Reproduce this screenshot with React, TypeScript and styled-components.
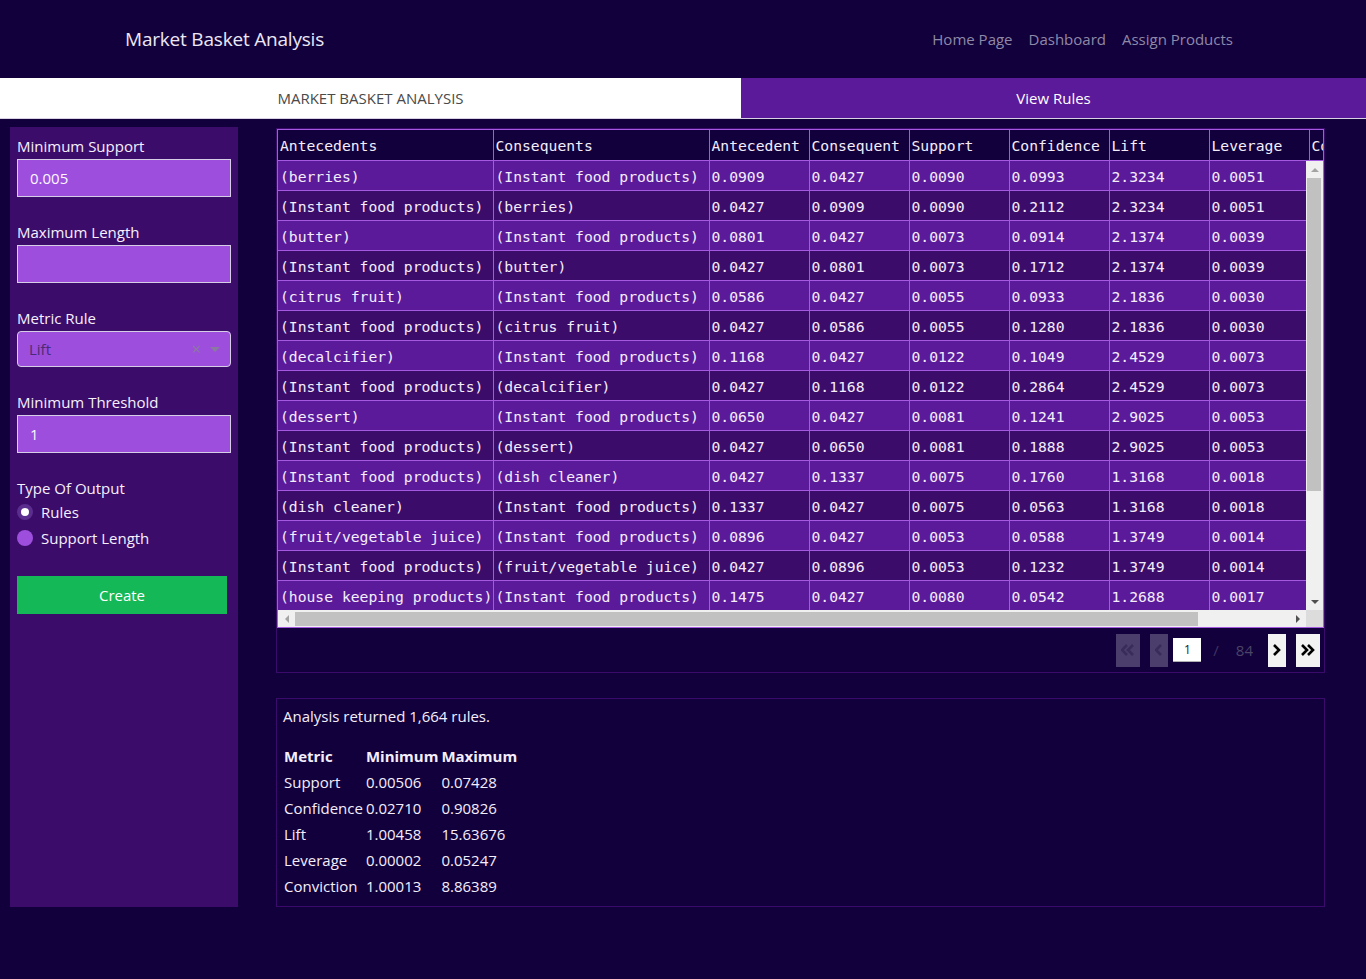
import { FC } from "react";
import styled, { createGlobalStyle } from "styled-components";

const GlobalStyle = createGlobalStyle`
  html, body {
    margin: 0;
    padding: 0;
    background: #12003c;
    font-family: "Open Sans", "Noto Sans", sans-serif;
    color: #f4eefc;
  }
`;

const Page = styled.div`
  width: 1366px;
  min-height: 979px;
  background: #12003c;
`;

/* ---------- top navbar ---------- */
const NavBar = styled.header`
  height: 78px;
  display: flex;
  align-items: center;
`;
const NavInner = styled.div`
  width: 1140px;
  margin: 0 auto;
  padding: 0 12px;
  box-sizing: border-box;
  display: flex;
  align-items: center;
  justify-content: space-between;
`;
const Brand = styled.div`
  font-size: 19px;
  color: #ece8f6;
  letter-spacing: -0.2px;
`;
const NavLinks = styled.nav`
  display: flex;
  padding-right: 8px;
  gap: 16px;
`;
const NavLink = styled.a`
  font-size: 15px;
  color: #8f89a8;
  text-decoration: none;
`;

/* ---------- tabs ---------- */
const TabBar = styled.div`
  display: grid;
  grid-template-columns: 741px 1fr;
  height: 40px;
  border-bottom: 1px solid #d8d2e4;
`;
const Tab = styled.div<{ $active?: boolean }>`
  display: flex;
  align-items: center;
  justify-content: center;
  font-size: 15px;
  background: ${(p) => (p.$active ? "#5b1a9a" : "#ffffff")};
  color: ${(p) => (p.$active ? "#ffffff" : "#4a4a4a")};
  text-transform: ${(p) => (p.$active ? "none" : "uppercase")};
`;

/* ---------- body layout ---------- */
const Body = styled.div`
  display: grid;
  grid-template-columns: 228px 1049px;
  column-gap: 38px;
  padding: 8px 0 0 10px;
`;

const Sidebar = styled.aside`
  background: #3c0c6a;
  height: 780px;
  padding: 8px 7px 0;
  box-sizing: border-box;
`;
const Field = styled.div`
  margin-bottom: 24px;
`;
const Label = styled.div<{ $tight?: boolean }>`
  font-size: 15px;
  line-height: 22px;
  color: #f6f0ff;
  margin-bottom: ${(p) => (p.$tight ? 0 : 2)}px;
`;
const TextInput = styled.div`
  height: 38px;
  width: 214px;
  box-sizing: border-box;
  background: #9d4edd;
  border: 1px solid #d6cde6;
  padding: 0 12px;
  font-size: 15px;
  display: flex;
  align-items: center;
  color: #fbf7ff;
`;
const Select = styled.div`
  height: 36px;
  width: 214px;
  box-sizing: border-box;
  background: #9d4edd;
  border: 1px solid #d6cde6;
  border-radius: 4px;
  padding: 0 10px 0 11px;
  font-size: 15px;
  display: flex;
  align-items: center;
  color: #4b2a75;
`;
const SelectValue = styled.span`
  flex: 1;
`;
const SelectClear = styled.span`
  color: #8a7aa0;
  font-size: 16px;
  margin-right: 9px;
`;
const Caret = styled.span`
  width: 0;
  height: 0;
  border-left: 5px solid transparent;
  border-right: 5px solid transparent;
  border-top: 5px solid #8a7aa0;
`;
const RadioRow = styled.label`
  display: flex;
  align-items: center;
  gap: 8px;
  font-size: 15px;
  height: 26px;
  color: #f6f0ff;
`;
const RadioDot = styled.span<{ $checked?: boolean }>`
  width: 16px;
  height: 16px;
  border-radius: 50%;
  box-sizing: border-box;
  background: ${(p) => (p.$checked ? "#ffffff" : "#9d4edd")};
  border: ${(p) => (p.$checked ? "4px solid #5a2d8e" : "none")};
`;
const CreateButton = styled.button`
  margin-top: 25px;
  width: 210px;
  height: 38px;
  border: none;
  background: #14b856;
  color: #ffffff;
  font-family: inherit;
  font-size: 15px;
  cursor: pointer;
`;

/* ---------- rules table ---------- */
const Main = styled.main`
  display: flex;
  flex-direction: column;
  gap: 25px;
  padding-top: 1px;
`;
const Card = styled.section`
  border: 1px solid #3a0b6b;
`;
const TableFrame = styled.div`
  border: 1px solid #a35ae0;
`;
const HeadClip = styled.div`
  overflow: hidden;
  background: #12003c;
`;
const ScrollArea = styled.div`
  display: grid;
  grid-template-columns: 1fr 17px;
  grid-template-rows: 449px 17px;
  background: #f0f0f0;
`;
const Viewport = styled.div`
  overflow: hidden;
`;
const VBar = styled.div`
  display: flex;
  flex-direction: column;
  background: #f0f0f0;
`;
const HBar = styled.div`
  display: flex;
  background: #f0f0f0;
`;
const Corner = styled.div`
  background: #dcdcdc;
`;
const ArrowBtn = styled.div`
  width: 17px;
  height: 17px;
  flex: none;
  display: flex;
  align-items: center;
  justify-content: center;
`;
const Tri = styled.span<{ $dir: "up" | "down" | "left" | "right"; $on?: boolean }>`
  width: 0;
  height: 0;
  ${(p) => {
    const c = p.$on ? "#505050" : "#a3a3a3";
    switch (p.$dir) {
      case "up":
        return `border-left: 4px solid transparent; border-right: 4px solid transparent; border-bottom: 4px solid ${c};`;
      case "down":
        return `border-left: 4px solid transparent; border-right: 4px solid transparent; border-top: 4px solid ${c};`;
      case "left":
        return `border-top: 4px solid transparent; border-bottom: 4px solid transparent; border-right: 4px solid ${c};`;
      default:
        return `border-top: 4px solid transparent; border-bottom: 4px solid transparent; border-left: 4px solid ${c};`;
    }
  }}
`;
const Track = styled.div<{ $vertical?: boolean }>`
  flex: 1;
  display: flex;
  flex-direction: ${(p) => (p.$vertical ? "column" : "row")};
  padding: ${(p) => (p.$vertical ? "0 2px 0 1px" : "2px 0 1px")};
`;
const Thumb = styled.div`
  background: #c1c1c1;
  flex: none;
`;

const Grid = styled.table`
  border-collapse: collapse;
  table-layout: fixed;
  width: 1131px;
  font-family: "DejaVu Sans Mono", "Liberation Mono", monospace;
  font-size: 14.7px;
  color: #f4eefc;
`;
const HeadCell = styled.th`
  text-align: left;
  font-weight: normal;
  height: 30px;
  padding: 0 2px;
  border: 1px solid #a35ae0;
  border-top: none;
  white-space: nowrap;
  overflow: hidden;
  &:first-child { border-left: none; }
`;
const Row = styled.tr<{ $odd: boolean }>`
  background: ${(p) => (p.$odd ? "#5b1a9a" : "#3c0c6a")};
`;
const Cell = styled.td`
  height: 27px;
  padding: 2px 2px 0;
  border: 1px solid #a35ae0;
  border-top: none;
  white-space: nowrap;
  overflow: hidden;
  &:first-child { border-left: none; }
`;

const Pager = styled.div`
  height: 44px;
  display: flex;
  align-items: center;
  justify-content: flex-end;
  padding-right: 4px;
`;
const PageBtn = styled.button<{ $disabled?: boolean; $w: number; $gap: number }>`
  width: ${(p) => p.$w}px;
  height: 33px;
  border: none;
  padding: 0;
  margin-left: ${(p) => p.$gap}px;
  background: ${(p) => (p.$disabled ? "#4b3d6c" : "#f2f2f2")};
  display: flex;
  align-items: center;
  justify-content: center;
`;
const PageInput = styled.div`
  width: 28px;
  height: 23px;
  margin-left: 5px;
  background: #ffffff;
  border-bottom: 1px solid #b0b0b0;
  color: #222;
  font-size: 12px;
  display: flex;
  align-items: center;
  justify-content: center;
`;
const PageSep = styled.span`
  color: #3e3462;
  font-size: 15px;
  margin: 0 17px 0 12px;
`;
const PageTotal = styled.span`
  color: #4c4468;
  font-size: 15px;
`;

/* ---------- summary ---------- */
const Summary = styled.section`
  border: 1px solid #3a0b6b;
  padding: 6px 6px 10px;
  height: 209px;
  box-sizing: border-box;
  font-size: 15px;
`;
const SummaryText = styled.p`
  margin: 0 0 16px;
  line-height: 22px;
`;
const StatTable = styled.table`
  border-collapse: collapse;
  & td, & th {
    padding: 0 2px 0 1px;
    height: 26px;
    text-align: left;
  }
  & th {
    font-weight: 700;
  }
`;

type Rule = [string, string, string, string, string, string, string, string, string];

const IFP = "(Instant food products)";
const rules: Rule[] = [
  ["(berries)", IFP, "0.0909", "0.0427", "0.0090", "0.0993", "2.3234", "0.0051", "1.0628"],
  [IFP, "(berries)", "0.0427", "0.0909", "0.0090", "0.2112", "2.3234", "0.0051", "1.1526"],
  ["(butter)", IFP, "0.0801", "0.0427", "0.0073", "0.0914", "2.1374", "0.0039", "1.0536"],
  [IFP, "(butter)", "0.0427", "0.0801", "0.0073", "0.1712", "2.1374", "0.0039", "1.1099"],
  ["(citrus fruit)", IFP, "0.0586", "0.0427", "0.0055", "0.0933", "2.1836", "0.0030", "1.0558"],
  [IFP, "(citrus fruit)", "0.0427", "0.0586", "0.0055", "0.1280", "2.1836", "0.0030", "1.0797"],
  ["(decalcifier)", IFP, "0.1168", "0.0427", "0.0122", "0.1049", "2.4529", "0.0073", "1.0695"],
  [IFP, "(decalcifier)", "0.0427", "0.1168", "0.0122", "0.2864", "2.4529", "0.0073", "1.2380"],
  ["(dessert)", IFP, "0.0650", "0.0427", "0.0081", "0.1241", "2.9025", "0.0053", "1.0929"],
  [IFP, "(dessert)", "0.0427", "0.0650", "0.0081", "0.1888", "2.9025", "0.0053", "1.1524"],
  [IFP, "(dish cleaner)", "0.0427", "0.1337", "0.0075", "0.1760", "1.3168", "0.0018", "1.0514"],
  ["(dish cleaner)", IFP, "0.1337", "0.0427", "0.0075", "0.0563", "1.3168", "0.0018", "1.0144"],
  ["(fruit/vegetable juice)", IFP, "0.0896", "0.0427", "0.0053", "0.0588", "1.3749", "0.0014", "1.0171"],
  [IFP, "(fruit/vegetable juice)", "0.0427", "0.0896", "0.0053", "0.1232", "1.3749", "0.0014", "1.0383"],
  ["(house keeping products)", IFP, "0.1475", "0.0427", "0.0080", "0.0542", "1.2688", "0.0017", "1.0121"],
  [IFP, "(house keeping products)", "0.0427", "0.1475", "0.0080", "0.1873", "1.2688", "0.0017", "1.0494"],
];

const columns = [
  { title: "Antecedents", width: 215 },
  { title: "Consequents", width: 216 },
  { title: "Antecedent", width: 100 },
  { title: "Consequent", width: 100 },
  { title: "Support", width: 100 },
  { title: "Confidence", width: 100 },
  { title: "Lift", width: 100 },
  { title: "Leverage", width: 100 },
  { title: "Conviction", width: 100 },
];

const stats = [
  ["Support", "0.00506", "0.07428"],
  ["Confidence", "0.02710", "0.90826"],
  ["Lift", "1.00458", "15.63676"],
  ["Leverage", "0.00002", "0.05247"],
  ["Conviction", "1.00013", "8.86389"],
];

const ColGroup: FC = () => (
  <colgroup>
    {columns.map((c) => (
      <col key={c.title} style={{ width: c.width }} />
    ))}
  </colgroup>
);

const Chevron: FC<{ dir: "left" | "right"; double?: boolean; color: string }> = ({ dir, double, color }) => {
  const w = double ? 14 : 8;
  const pts = (x: number) =>
    dir === "right" ? `${x},2 ${x + 5},7 ${x},12` : `${x + 5},2 ${x},7 ${x + 5},12`;
  return (
    <svg width={w} height={14} viewBox={`0 0 ${w} 14`}>
      <polyline points={pts(1)} fill="none" stroke={color} strokeWidth={2.6} />
      {double && <polyline points={pts(7)} fill="none" stroke={color} strokeWidth={2.6} />}
    </svg>
  );
};

export default function App() {
  return (
    <Page>
      <GlobalStyle />
      <NavBar>
        <NavInner>
          <Brand>Market Basket Analysis</Brand>
          <NavLinks>
            <NavLink href="#">Home Page</NavLink>
            <NavLink href="#">Dashboard</NavLink>
            <NavLink href="#">Assign Products</NavLink>
          </NavLinks>
        </NavInner>
      </NavBar>
      <TabBar>
        <Tab>Market Basket Analysis</Tab>
        <Tab $active>View Rules</Tab>
      </TabBar>
      <Body>
        <Sidebar>
          <Field>
            <Label>Minimum Support</Label>
            <TextInput>0.005</TextInput>
          </Field>
          <Field>
            <Label>Maximum Length</Label>
            <TextInput />
          </Field>
          <Field>
            <Label>Metric Rule</Label>
            <Select>
              <SelectValue>Lift</SelectValue>
              <SelectClear>×</SelectClear>
              <Caret />
            </Select>
          </Field>
          <Field>
            <Label>Minimum Threshold</Label>
            <TextInput>1</TextInput>
          </Field>
          <Label $tight>Type Of Output</Label>
          <RadioRow>
            <RadioDot $checked />
            Rules
          </RadioRow>
          <RadioRow>
            <RadioDot />
            Support Length
          </RadioRow>
          <CreateButton>Create</CreateButton>
        </Sidebar>
        <Main>
          <Card>
            <TableFrame>
              <HeadClip>
                <Grid>
                  <ColGroup />
                  <thead>
                    <tr>
                      {columns.map((c) => (
                        <HeadCell key={c.title}>{c.title}</HeadCell>
                      ))}
                    </tr>
                  </thead>
                </Grid>
              </HeadClip>
              <ScrollArea>
                <Viewport>
                  <Grid>
                    <ColGroup />
                    <tbody>
                      {rules.map((r, i) => (
                        <Row key={i} $odd={i % 2 === 0}>
                          {r.map((v, j) => (
                            <Cell key={j}>{v}</Cell>
                          ))}
                        </Row>
                      ))}
                    </tbody>
                  </Grid>
                </Viewport>
                <VBar>
                  <ArrowBtn>
                    <Tri $dir="up" />
                  </ArrowBtn>
                  <Track $vertical>
                    <Thumb style={{ height: 313 }} />
                  </Track>
                  <ArrowBtn>
                    <Tri $dir="down" $on />
                  </ArrowBtn>
                </VBar>
                <HBar>
                  <ArrowBtn>
                    <Tri $dir="left" />
                  </ArrowBtn>
                  <Track>
                    <Thumb style={{ width: 903 }} />
                  </Track>
                  <ArrowBtn>
                    <Tri $dir="right" $on />
                  </ArrowBtn>
                </HBar>
                <Corner />
              </ScrollArea>
            </TableFrame>
            <Pager>
              <PageBtn $disabled $w={24} $gap={0}>
                <Chevron dir="left" double color="#392b5a" />
              </PageBtn>
              <PageBtn $disabled $w={18} $gap={10}>
                <Chevron dir="left" color="#392b5a" />
              </PageBtn>
              <PageInput>1</PageInput>
              <PageSep>/</PageSep>
              <PageTotal>84</PageTotal>
              <PageBtn $w={18} $gap={15}>
                <Chevron dir="right" color="#000" />
              </PageBtn>
              <PageBtn $w={24} $gap={10}>
                <Chevron dir="right" double color="#000" />
              </PageBtn>
            </Pager>
          </Card>
          <Summary>
            <SummaryText>Analysis returned 1,664 rules.</SummaryText>
            <StatTable>
              <thead>
                <tr>
                  <th>Metric</th>
                  <th>Minimum</th>
                  <th>Maximum</th>
                </tr>
              </thead>
              <tbody>
                {stats.map((s) => (
                  <tr key={s[0]}>
                    <td>{s[0]}</td>
                    <td>{s[1]}</td>
                    <td>{s[2]}</td>
                  </tr>
                ))}
              </tbody>
            </StatTable>
          </Summary>
        </Main>
      </Body>
    </Page>
  );
}
